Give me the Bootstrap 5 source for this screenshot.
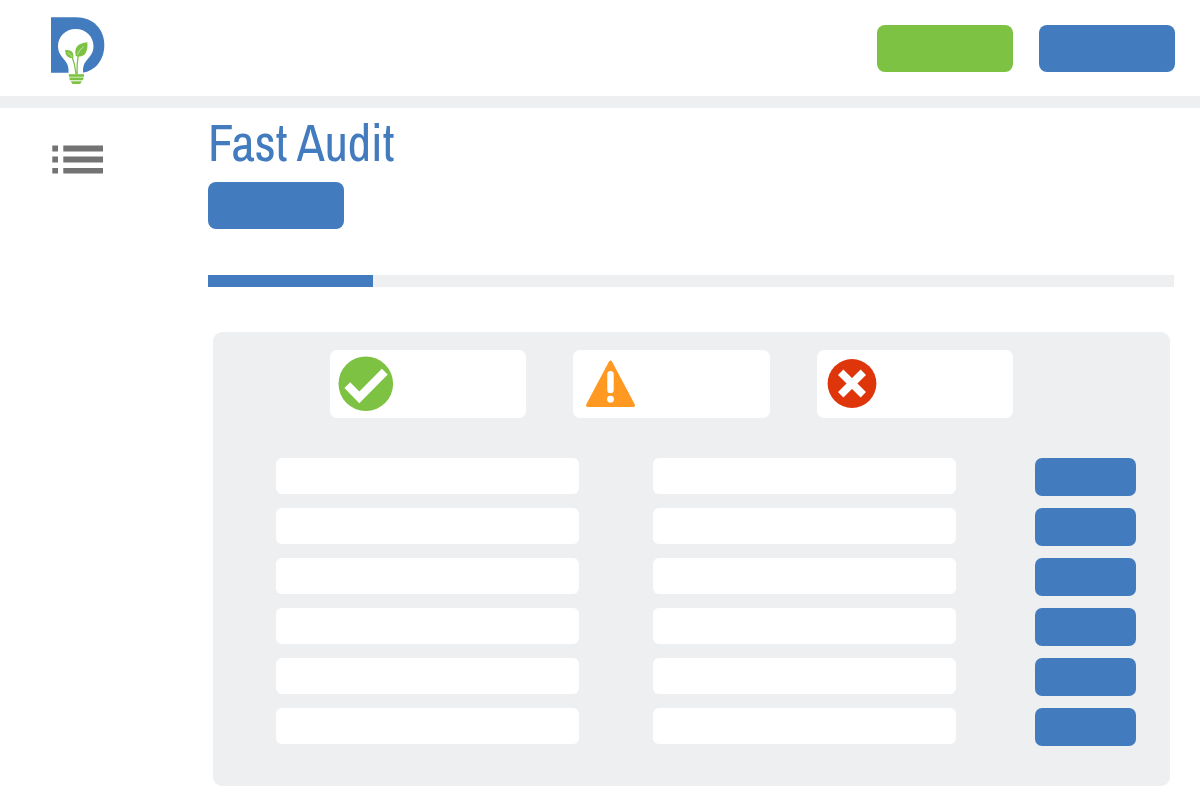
<!DOCTYPE html>
<html lang="en">
<head>
<meta charset="utf-8">
<meta name="viewport" content="width=device-width, initial-scale=1">
<title>Fast Audit</title>
<link href="https://cdn.jsdelivr.net/npm/bootstrap@5.3.0/dist/css/bootstrap.min.css" rel="stylesheet">
<style>
  :root { --brand-blue: #427bbe; --brand-green: #7dc243; --pale: #eeeff1; }
  body { font-family: "Archivo Narrow", "Roboto Condensed", "Liberation Sans", sans-serif; background: #fff; }
  .topbar { border-bottom: 12px solid var(--pale); padding: 16px 25px 11px 50px; }
  .topbar-actions { gap: 26px; padding-top: 9px; }
  .btn-block { width: 136px; height: 47px; border-radius: 8px; border: 0; }
  .btn-blue, .btn-blue:hover { background: var(--brand-blue); }
  .btn-green, .btn-green:hover { background: var(--brand-green); }
  .side { width: 208px; padding: 36px 0 0 52px; }
  .content { padding: 12px 26px 9px 0; }
  .page-title { color: var(--brand-blue); font-size: 51px; line-height: 46px; margin-bottom: 16px; }
  .audit-progress { height: 12px; border-radius: 0; margin-top: 46px; background: var(--pale); }
  .audit-progress .progress-bar { background: var(--brand-blue); }
  .panel { background: var(--pale); border-radius: 9px; margin: 45px 4px 0 5px; padding: 18px 34px 40px 63px; }
  .status-grid { display: grid; grid-template-columns: repeat(3, 1fr); gap: 47px; padding: 0 123px 0 54px; margin-bottom: 40px; }
  .status-box { height: 68px; border: 0; border-radius: 7px; padding-left: 8px; }
  .audit-row { display: grid; grid-template-columns: 1fr 1fr 106px; column-gap: 74px; }
  .audit-rows { gap: 12px; }
  .audit-row .form-control { height: 36px; border: 0; border-radius: 6px; background: #fff; }
  .btn-row { width: 101px; height: 38px; border: 0; border-radius: 7px; justify-self: end; }
</style>
</head>
<body>
<header class="topbar d-flex justify-content-between align-items-start">
  <a href="#" class="d-block" aria-label="Home">
    <svg class="d-block" width="56" height="69" viewBox="50 16 56 69" aria-hidden="true">
      <path fill="#427bbe" d="M51 17.300H76C93 17.300 104.300 29 104.300 45.200C104.300 60 95 71 82.500 72.700H51Z"/>
      <path fill="#fff" d="M75.700 28.900C65.500 28.900 58 36.500 58 46.200C58 56 65.500 58.500 67.800 65.500C68.700 68.500 68.500 71 68.500 73.500H83C83 71 82.800 68.500 83.700 65.500C86 58.500 93.500 56 93.500 46.200C93.500 36.500 86 28.900 75.700 28.900Z"/>
      <g fill="#7dc243">
        <path d="M75.800 56C73.800 48 77.500 43.200 87.300 42.300C88.300 51 85 57.500 77.500 56.500Z"/>
        <path d="M73.200 58C68 58.600 65.200 55.500 65.200 50C71 49.300 74.300 52 73.200 58Z"/>
        <path d="M68.800 74.200H84V76.800H68.800Z"/>
        <path d="M69.300 77.600H83.500L83 80.300H69.800Z"/>
        <path d="M70.800 81.200H81.800L80.200 83.900H72.500Z"/>
      </g>
      <path d="M72 56.500Q75 64 76 74M78.500 55Q76.700 63 77.200 74" stroke="#7dc243" stroke-width="1.300" fill="none"/>
      <path d="M77.300 54.500Q80 49 83.800 46.500M67.500 52.500Q70.500 54 72 56.800" stroke="#fff" stroke-width=".5" fill="none"/>
    </svg>
  </a>
  <div class="topbar-actions d-flex">
    <button type="button" class="btn btn-block btn-green" aria-label="Primary action"></button>
    <button type="button" class="btn btn-block btn-blue" aria-label="Account"></button>
  </div>
</header>

<div class="d-flex">
  <nav class="side flex-shrink-0">
    <button type="button" class="btn border-0 p-0 d-block" aria-label="Menu">
      <svg class="d-block" width="52" height="31" viewBox="0 0 52 31" fill="#737373" aria-hidden="true">
        <path d="M.3 1.600H6V7.400H.3ZM11.300 1.600H51V7.400H11.300ZM.3 12.600H6V18.400H.3ZM11.300 12.600H51V18.400H11.300ZM.3 24H6V29.600H.3ZM11.300 24H51V29.600H11.300Z"/>
      </svg>
    </button>
  </nav>

  <main class="content flex-grow-1">
    <h1 class="page-title fw-normal">Fast Audit</h1>
    <button type="button" class="btn btn-block btn-blue d-block" aria-label="Start audit"></button>
    <div class="progress audit-progress" role="progressbar" aria-label="Audit progress" aria-valuenow="17" aria-valuemin="0" aria-valuemax="100">
      <div class="progress-bar" style="width: 17.1%"></div>
    </div>

    <section class="panel">
      <div class="status-grid">
        <div class="card status-box justify-content-center">
          <svg width="56" height="56" viewBox="0 0 56 56" role="img" aria-label="Passed">
            <circle cx="27.800" cy="27.700" r="27.300" fill="#7dc243"/>
            <path d="M9.300 29.200L21.300 41.400L46.800 15.700" fill="none" stroke="#fff" stroke-width="8.200"/>
          </svg>
        </div>
        <div class="card status-box justify-content-center">
          <svg width="60" height="56" viewBox="0 0 60 56" role="img" aria-label="Warning">
            <path d="M29.500 6.200L52.300 49.300H6.700Z" fill="#ff9922" stroke="#ff9922" stroke-width="3.400" stroke-linejoin="round"/>
            <path d="M29.500 18.300V33.900" stroke="#fff" stroke-width="6.400" stroke-linecap="round"/>
            <circle cx="29.500" cy="43.200" r="3.400" fill="#fff"/>
          </svg>
        </div>
        <div class="card status-box justify-content-center">
          <svg width="56" height="56" viewBox="0 0 56 56" role="img" aria-label="Failed">
            <circle cx="27" cy="27.500" r="24.400" fill="#de350b"/>
            <path d="M15.700 16.200L38.300 38.800M38.300 16.200L15.700 38.800" stroke="#fff" stroke-width="7.600"/>
          </svg>
        </div>
      </div>

      <div class="audit-rows d-flex flex-column">
        <div class="audit-row"><input type="text" class="form-control" aria-label="Check 1"><input type="text" class="form-control" aria-label="Result 1"><button type="button" class="btn btn-row btn-blue" aria-label="Open 1"></button></div>
        <div class="audit-row"><input type="text" class="form-control" aria-label="Check 2"><input type="text" class="form-control" aria-label="Result 2"><button type="button" class="btn btn-row btn-blue" aria-label="Open 2"></button></div>
        <div class="audit-row"><input type="text" class="form-control" aria-label="Check 3"><input type="text" class="form-control" aria-label="Result 3"><button type="button" class="btn btn-row btn-blue" aria-label="Open 3"></button></div>
        <div class="audit-row"><input type="text" class="form-control" aria-label="Check 4"><input type="text" class="form-control" aria-label="Result 4"><button type="button" class="btn btn-row btn-blue" aria-label="Open 4"></button></div>
        <div class="audit-row"><input type="text" class="form-control" aria-label="Check 5"><input type="text" class="form-control" aria-label="Result 5"><button type="button" class="btn btn-row btn-blue" aria-label="Open 5"></button></div>
        <div class="audit-row"><input type="text" class="form-control" aria-label="Check 6"><input type="text" class="form-control" aria-label="Result 6"><button type="button" class="btn btn-row btn-blue" aria-label="Open 6"></button></div>
      </div>
    </section>
  </main>
</div>
<script src="https://cdn.jsdelivr.net/npm/bootstrap@5.3.0/dist/js/bootstrap.bundle.min.js"></script>
</body>
</html>
